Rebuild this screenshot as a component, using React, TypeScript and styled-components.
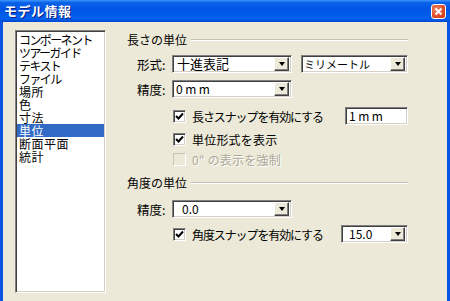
import React from 'react';
import styled, { createGlobalStyle } from 'styled-components';

const GlobalStyle = createGlobalStyle`
  html, body {
    margin: 0;
    padding: 0;
    background: #ece9d8;
    overflow: hidden;
  }
  body {
    font-family: "Noto Sans CJK JP", "Noto Sans", sans-serif;
    font-size: 12px;
    color: #000;
  }
`;

const Window = styled.div`
  width: 450px;
  height: 301px;
  display: flex;
  flex-direction: column;
  background: #ece9d8;
`;

const TitleBar = styled.div`
  height: 22px;
  flex: none;
  display: flex;
  align-items: center;
  padding: 0 4px 0 4px;
  background: linear-gradient(
    180deg,
    #3d95ff 0%,
    #0a62e8 12%,
    #0055e5 45%,
    #0362f0 85%,
    #0047cf 100%
  );
`;

const Title = styled.span`
  color: #fff;
  font-weight: bold;
  font-size: 13px;
  line-height: 16px;
  letter-spacing: 0.5px;
  text-shadow: 1px 1px 0 #0a1e80;
`;

const CloseButton = styled.div`
  margin-left: auto;
  width: 13px;
  height: 13px;
  border: 1px solid #fff;
  border-radius: 3px;
  background: radial-gradient(circle at 35% 35%, #f08a6a, #d8411c 70%);
  display: flex;
  align-items: center;
  justify-content: center;
`;

const Frame = styled.div`
  flex: 1;
  display: flex;
  border-left: 3px solid #0a55e6;
  border-right: 3px solid #0a55e6;
  min-height: 0;
`;

const Body = styled.div`
  flex: 1;
  display: flex;
  padding: 8px 0 0 12px;
  gap: 21px;
`;

const ListBox = styled.div`
  width: 87px;
  height: 257px;
  background: #fff;
  border: 1px solid;
  border-color: #808080 #fff #fff #808080;
  box-shadow: inset 1px 1px 0 #404040, inset -1px -1px 0 #d4d0c8;
  padding: 2px 1px;
  display: flex;
  flex-direction: column;
`;

const ListItem = styled.div<{ $selected?: boolean; $narrow?: boolean }>`
  height: 13px;
  line-height: 13px;
  font-size: 12px;
  padding-left: 2px;
  white-space: nowrap;
  letter-spacing: ${(p) => (p.$narrow ? '-1.6px' : '0.5px')};
  color: ${(p) => (p.$selected ? '#fff' : '#000')};
  background: ${(p) => (p.$selected ? '#316ac5' : 'transparent')};
`;

const Panel = styled.div`
  width: 281px;
  display: flex;
  flex-direction: column;
`;

const GroupHeader = styled.div<{ $mt: number }>`
  margin-top: ${(p) => p.$mt}px;
  height: 16px;
  display: flex;
  align-items: center;
  gap: 4px;
  line-height: 16px;
  white-space: nowrap;
`;

const GroupLine = styled.div`
  flex: 1;
  height: 0;
  border-top: 1px solid #c5c2b2;
  border-bottom: 1px solid #fff;
`;

const FormRow = styled.div<{ $mt: number }>`
  margin-top: ${(p) => p.$mt}px;
  height: 18px;
  display: flex;
  align-items: center;
  padding-left: 10px;
`;

const FieldLabel = styled.span`
  width: 35px;
  flex: none;
  font-size: 12.5px;
  white-space: nowrap;
`;

const CheckRow = styled.div<{ $mt: number; $disabled?: boolean }>`
  margin-top: ${(p) => p.$mt}px;
  height: 18px;
  display: flex;
  align-items: center;
  padding-left: 46px;
  color: ${(p) => (p.$disabled ? '#aca899' : '#000')};
  text-shadow: ${(p) => (p.$disabled ? '1px 1px 0 #fff' : 'none')};
`;

const CheckLabel = styled.span<{ $narrow?: boolean }>`
  white-space: nowrap;
  letter-spacing: ${(p) => (p.$narrow ? '-1.1px' : '0.2px')};
`;

const CheckBox = styled.div<{ $disabled?: boolean }>`
  width: 11px;
  height: 11px;
  flex: none;
  margin-right: 6px;
  background: ${(p) => (p.$disabled ? '#ece9d8' : '#fff')};
  border: 1px solid;
  border-color: ${(p) => (p.$disabled ? '#c8c4b4 #fff #fff #c8c4b4' : '#808080 #fff #fff #808080')};
  box-shadow: ${(p) => (p.$disabled ? 'none' : 'inset 1px 1px 0 #404040, inset -1px -1px 0 #d4d0c8')};
  display: flex;
  align-items: center;
  justify-content: center;
`;

const Combo = styled.div<{ $width: number; $pad?: number; $right?: boolean }>`
  width: ${(p) => p.$width}px;
  height: 18px;
  box-sizing: border-box;
  flex: none;
  display: flex;
  align-items: center;
  background: #fff;
  border: 1px solid;
  border-color: #808080 #fff #fff #808080;
  box-shadow: inset 1px 1px 0 #404040, inset -1px -1px 0 #d4d0c8;
  padding: 1px 2px 1px ${(p) => p.$pad ?? 3}px;
  margin-left: ${(p) => (p.$right ? 'auto' : '0')};
`;

const ComboText = styled.span<{ $spaced?: boolean; $size?: number }>`
  flex: 1;
  white-space: nowrap;
  font-size: ${(p) => p.$size ?? 12}px;
  line-height: 14px;
  letter-spacing: ${(p) => (p.$spaced ? '2.5px' : '0')};
`;

const DropButton = styled.div`
  width: 13px;
  height: 12px;
  flex: none;
  background: #ece9d8;
  border: 1px solid;
  border-color: #fff #404040 #404040 #fff;
  box-shadow: inset -1px -1px 0 #808080;
  display: flex;
  align-items: center;
  justify-content: center;
`;

const Arrow = styled.div`
  width: 0;
  height: 0;
  border-left: 3.5px solid transparent;
  border-right: 3.5px solid transparent;
  border-top: 4px solid #000;
`;

const TextInput = styled.div`
  width: 63px;
  height: 18px;
  box-sizing: border-box;
  margin-left: auto;
  background: #fff;
  border: 1px solid;
  border-color: #808080 #fff #fff #808080;
  box-shadow: inset 1px 1px 0 #404040, inset -1px -1px 0 #d4d0c8;
  padding: 1px 3px;
  line-height: 14px;
  letter-spacing: 2.5px;
  white-space: nowrap;
`;

const Check = () => (
  <svg width="9" height="9" viewBox="0 0 9 9">
    <path d="M1 4 L3.5 6.5 L8 1.5" stroke="#000" strokeWidth="2" fill="none" />
  </svg>
);

function Dropdown({
  width,
  text,
  pad,
  right,
  spaced,
  size,
}: {
  width: number;
  text: string;
  pad?: number;
  right?: boolean;
  spaced?: boolean;
  size?: number;
}) {
  return (
    <Combo $width={width} $pad={pad} $right={right}>
      <ComboText $spaced={spaced} $size={size}>
        {text}
      </ComboText>
      <DropButton>
        <Arrow />
      </DropButton>
    </Combo>
  );
}

const items = [
  { label: 'コンポーネント', narrow: true },
  { label: 'ツアーガイド', narrow: true },
  { label: 'テキスト', narrow: true },
  { label: 'ファイル', narrow: true },
  { label: '場所' },
  { label: '色' },
  { label: '寸法' },
  { label: '単位' },
  { label: '断面平面' },
  { label: '統計' },
];

function App() {
  return (
    <Window>
      <GlobalStyle />
      <TitleBar>
        <Title>モデル情報</Title>
        <CloseButton>
          <svg width="9" height="9" viewBox="0 0 9 9">
            <path d="M1.5 1.5 L7.5 7.5 M7.5 1.5 L1.5 7.5" stroke="#fff" strokeWidth="1.8" />
          </svg>
        </CloseButton>
      </TitleBar>
      <Frame>
        <Body>
          <ListBox>
            {items.map((item) => (
              <ListItem key={item.label} $narrow={item.narrow} $selected={item.label === '単位'}>
                {item.label}
              </ListItem>
            ))}
          </ListBox>
          <Panel>
            <GroupHeader $mt={2}>
              <span>長さの単位</span>
              <GroupLine />
            </GroupHeader>
            <FormRow $mt={7}>
              <FieldLabel>形式:</FieldLabel>
              <Dropdown width={120} text="十進表記" pad={4} size={13} />
              <Dropdown width={107} text="ミリメートル" pad={2} right size={11} />
            </FormRow>
            <FormRow $mt={7}>
              <FieldLabel>精度:</FieldLabel>
              <Dropdown width={120} text="0mm" spaced />
            </FormRow>
            <CheckRow $mt={9}>
              <CheckBox>
                <Check />
              </CheckBox>
              <CheckLabel $narrow>長さスナップを有効にする</CheckLabel>
              <TextInput>1mm</TextInput>
            </CheckRow>
            <CheckRow $mt={5}>
              <CheckBox>
                <Check />
              </CheckBox>
              <CheckLabel>単位形式を表示</CheckLabel>
            </CheckRow>
            <CheckRow $mt={2} $disabled>
              <CheckBox $disabled />
              <CheckLabel>0&quot; の表示を強制</CheckLabel>
            </CheckRow>
            <GroupHeader $mt={7}>
              <span>角度の単位</span>
              <GroupLine />
            </GroupHeader>
            <FormRow $mt={9}>
              <FieldLabel>精度:</FieldLabel>
              <Dropdown width={120} text="0.0" pad={9} />
            </FormRow>
            <CheckRow $mt={7}>
              <CheckBox>
                <Check />
              </CheckBox>
              <CheckLabel $narrow>角度スナップを有効にする</CheckLabel>
              <Dropdown width={67} text="15.0" pad={7} right />
            </CheckRow>
          </Panel>
        </Body>
      </Frame>
    </Window>
  );
}

export default App;
